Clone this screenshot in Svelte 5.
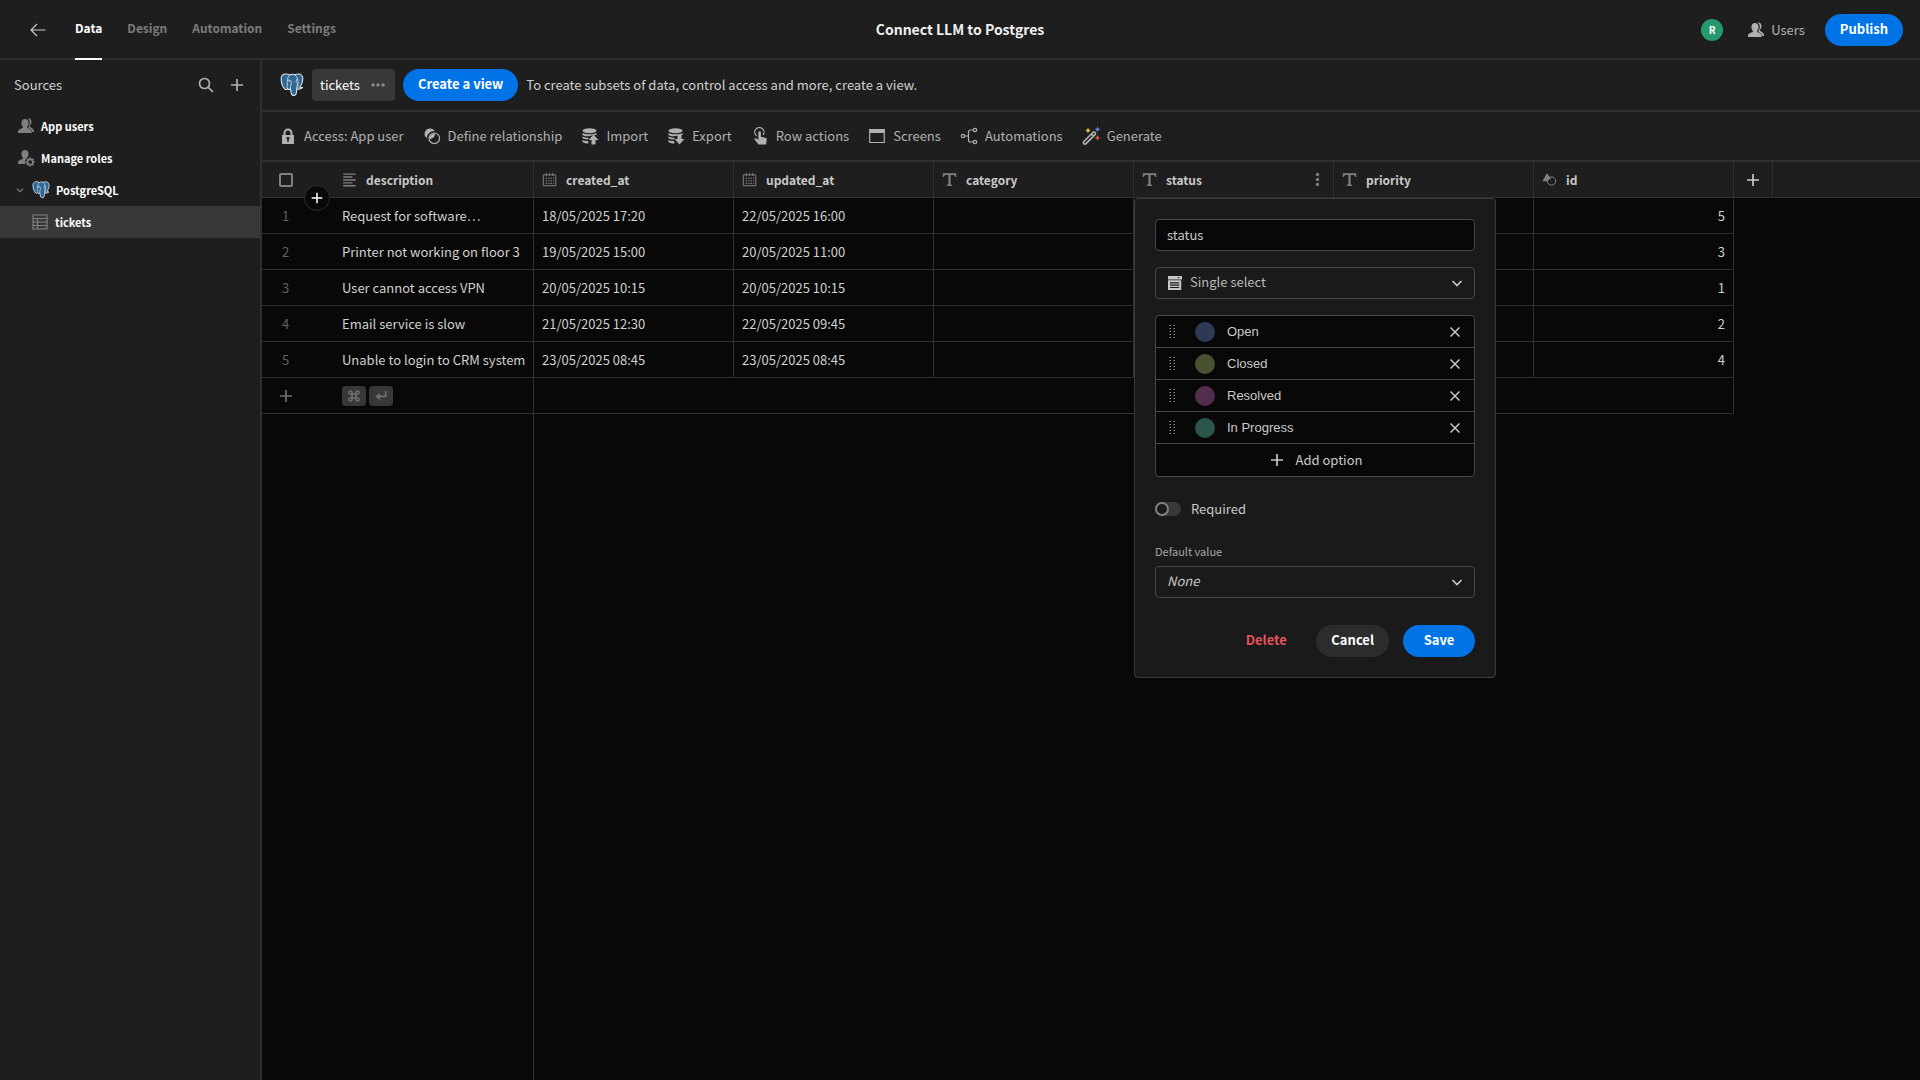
<script lang="ts">
  const tabs = ["Data", "Design", "Automation", "Settings"];
  let tab = $state("Data");

  const actions = [
    { icon: "lock", label: "Access: App user" },
    { icon: "relation", label: "Define relationship" },
    { icon: "import", label: "Import" },
    { icon: "export", label: "Export" },
    { icon: "touch", label: "Row actions" },
    { icon: "screens", label: "Screens" },
    { icon: "flow", label: "Automations" },
    { icon: "wand", label: "Generate" },
  ];

  const columns = [
    { name: "description", icon: "longtext" },
    { name: "created_at", icon: "calendar" },
    { name: "updated_at", icon: "calendar" },
    { name: "category", icon: "text" },
    { name: "status", icon: "text" },
    { name: "priority", icon: "text" },
    { name: "id", icon: "shapes" },
  ];

  const rows = [
    ["Request for software…", "18/05/2025 17:20", "22/05/2025 16:00", 5],
    ["Printer not working on floor 3", "19/05/2025 15:00", "20/05/2025 11:00", 3],
    ["User cannot access VPN", "20/05/2025 10:15", "20/05/2025 10:15", 1],
    ["Email service is slow", "21/05/2025 12:30", "22/05/2025 09:45", 2],
    ["Unable to login to CRM system", "23/05/2025 08:45", "23/05/2025 08:45", 4],
  ];

  let options = $state([
    { name: "Open", color: "#2e3a55" },
    { name: "Closed", color: "#475230" },
    { name: "Resolved", color: "#522d4d" },
    { name: "In Progress", color: "#2b544c" },
  ]);
  let columnName = $state("status");
  let required = $state(false);

  function removeOption(i: number) {
    options.splice(i, 1);
  }

  function addOption() {
    options.push({ name: "", color: "#2e3a55" });
  }
</script>

{#snippet icon(name: string)}
  <svg class="icon" viewBox="0 0 18 18" aria-hidden="true">
    {#if name === "back"}
      <path class="line" d="M16.5 9H2M8 3L2 9l6 6" />
    {:else if name === "search"}
      <circle class="line thick" cx="7.5" cy="7.5" r="5" />
      <path class="line thick" d="M11.3 11.3L16 16" />
    {:else if name === "plus"}
      <path class="line thick" d="M9 3v12M3 9h12" />
    {:else if name === "cross"}
      <path class="line thick" d="M4 4l10 10M14 4L4 14" />
    {:else if name === "chevron"}
      <path class="line thick" d="M4.5 7L9 11.5 13.5 7" />
    {:else if name === "more"}
      <circle cx="4" cy="9" r="1.7" /><circle cx="9" cy="9" r="1.7" /><circle cx="14" cy="9" r="1.7" />
    {:else if name === "kebab"}
      <circle cx="9" cy="3" r="2" /><circle cx="9" cy="9" r="2" /><circle cx="9" cy="15" r="2" />
    {:else if name === "users"}
      <path d="M8 2c2.400 0 3.600 1.700 3.600 4 0 1.600-.6 2.900-1.400 3.800v1.200c1.900.6 4.500 1.600 4.500 3.300V16H1v-1.700C1 12.600 3.800 11.600 5.800 11V9.800C5 8.900 4.400 7.600 4.400 6c0-2.300 1.200-4 3.600-4z" />
      <path d="M11.400 1.500c1.900.1 3.100 1.500 3.100 3.600 0 1.400-.6 2.600-1.400 3.500v1.400c1.800 1 4.200 2.300 4.200 5h-1.800c-.4-2-2.200-3.200-4-3.900V9.900c.8-1 1.300-2.300 1.300-3.900 0-1.900-.7-3.400-1.900-4.200z" />
    {:else if name === "roles"}
      <path d="M8 1c2.400 0 3.600 1.700 3.600 4 0 1.500-.5 2.700-1.300 3.600-1.600 1-2.500 3-2 5.200l.5 1.200H1v-1.500C1 11.600 3.800 10.600 5.800 10V8.800C5 7.900 4.400 6.600 4.400 5c0-2.300 1.200-4 3.600-4z" />
      <circle class="line thick" cx="13.200" cy="13" r="2.700" />
      <path class="line thick" d="M13.200 8.500v1.600M13.200 15.900v1.600M8.700 13h1.600M16.100 13h1.600M10 9.800l1.100 1.100M15.300 15.100l1.100 1.100M10 16.200l1.100-1.100M15.300 10.900l1.100-1.100" />
    {:else if name === "table"}
      <path class="line" d="M2 2h14v14H2zM2 5.500h14M2 9h14M2 12.500h14M6.500 5.500V16" />
    {:else if name === "lock"}
      <path fill-rule="evenodd" d="M3 8h1.500V6a4.500 4.500 0 0 1 9 0v2H15v9H3zM6.500 8h5V6a2.500 2.500 0 0 0-5 0zM8.300 12.800V15h1.400v-2.200a1.500 1.500 0 1 0-1.400 0z" />
    {:else if name === "relation"}
      <path d="M7 1.500a5.300 5.300 0 0 0-3.300 9.500A7.300 7.300 0 0 1 12 4.200 5.300 5.300 0 0 0 7 1.500z" />
      <circle class="line" cx="11.300" cy="11.300" r="5.300" />
      <path d="M12.200 6.300a6 6 0 0 1-6 6 6 6 0 0 1 6-6z" />
    {:else if name === "import" || name === "export"}
      <ellipse cx="8.500" cy="3.800" rx="7" ry="2.500" />
      <path d="M1.500 6c2 1.800 12 1.800 14 0v1.900l-4 .3C8 9.800 3.500 9.500 1.500 8z" />
      <path d="M1.500 9.500c1.700 1 4.400 1.300 6.200 1.200L7 12.500c-2 0-4.200-.4-5.500-1.200zM1.500 12.900c1.500.9 3.800 1.200 5.800 1.200v2.400c-2.500 0-5.200-.6-5.800-1.500z" />
      {#if name === "import"}
        <path d="M12.500 7.500l5 5.500h-3v4.500h-4V13h-3z" />
      {:else}
        <path d="M12.500 17.500l5-5.500h-3V8h-4v4h-3z" />
      {/if}
    {:else if name === "touch"}
      <path class="line" d="M5.500 8.800A4.600 4.600 0 1 1 12 8" />
      <path d="M7.300 5.500a1.300 1.300 0 0 1 2.600 0v4.200l5 1.300c.8.300 1 .8.900 1.500L15 17.500H7.500L3.200 12c.8-1.200 2-1 3 0l1.100 1z" />
    {:else if name === "screens"}
      <path class="line" d="M1.700 2.500h14.600v13H1.700z" />
      <path d="M1.700 2.500h14.600V6H1.700z" />
    {:else if name === "flow"}
      <circle class="line" cx="3" cy="9" r="1.700" />
      <circle class="line" cx="15" cy="3" r="1.700" />
      <circle class="line" cx="15" cy="15" r="1.700" />
      <path class="line" d="M5 9h3.500M13 3h-2.500a2 2 0 0 0-2 2v8a2 2 0 0 0 2 2H13" />
    {:else if name === "wand"}
      <path class="line thick" d="M1.800 14.500l9-9a1.500 1.500 0 0 1 2.200 2.200l-9 9a1.500 1.500 0 0 1-2.200-2.200zM9.300 7l2.200 2.200" />
      <path fill="#f0c040" d="M6 .8l.9 1.800 1.800.9-1.800.9L6 6.200l-.9-1.800-1.800-.9 1.800-.9z" />
      <path fill="#6b7fe8" d="M15.500 -.5l.9 2 2 .9-2 .9-.9 2-.9-2-2-.9 2-.9z" />
      <path fill="#e8543c" d="M15.500 8l.9 2 2 .9-2 .9-.9 2-.9-2-2-.9 2-.9z" />
    {:else if name === "longtext"}
      <path class="line thick" d="M1.500 2.500h15M1.500 6h11M1.500 9.500h15M1.500 13h11M1.500 16.500h15" />
    {:else if name === "calendar"}
      <path class="line" d="M1.500 3.500h15v13h-15zM5 1v4M13 1v4M9 1v3" />
      <path class="dots" d="M4.500 7.500h10M4.500 10.500h10M4.500 13.500h10" />
    {:else if name === "text"}
      <path d="M1 1.500h16v4.400h-1.300c-.3-1.800-.9-2.400-2.700-2.400h-2.700v10.700c0 1 .5 1.200 2 1.300v1.300H5.700v-1.300c1.500-.1 2-.3 2-1.300V3.500H5c-1.800 0-2.400.6-2.700 2.400H1z" />
    {:else if name === "shapes"}
      <path d="M6 1.500L11 8.500A5.500 5.500 0 0 0 6.700 11H.5z" />
      <circle class="line" cx="11.500" cy="10.800" r="5" />
    {:else if name === "dropdown"}
      <path fill-rule="evenodd" d="M0 0h18v4.500H0zM12 1.300l1.500 1.700L15 1.300zM0 5.500h17V18H0zM2.500 8v1.500h12V8zM2.500 11v1.500h12V11zM2.500 14v1.500h12V14z" />
    {:else if name === "grip"}
      <path class="dots fine" d="M7 1v17M11.500 1v17" />
    {:else if name === "command"}
      <path class="line heavy" d="M6.500 6.500h5v5h-5zM6.500 6.500h-2a2 2 0 1 1 2-2zM11.500 6.500v-2a2 2 0 1 1 2 2zM11.500 11.500h2a2 2 0 1 1-2 2zM6.500 11.500v2a2 2 0 1 1-2-2z" />
    {:else if name === "enter"}
      <path class="line heavy" d="M15 2.500v7H5" />
      <path d="M7.500 5v9L1.500 9.500z" />
    {/if}
  </svg>
{/snippet}

{#snippet postgres()}
  <svg class="logo" viewBox="0 0 24 24" aria-hidden="true">
    <path fill="#2f6792" stroke="#dfe6ec" stroke-width="1.100" stroke-linejoin="round" d="M5 1C2.500 1.300 1 3.200 1.200 6.500c.2 3.500 1.700 7.800 3.700 9.600 1 .8 2 .5 2.700-.4.900.7 1.900.9 3 .7.300 1.900.4 3.800 1.100 5 .7 1.200 3 1.300 4 .3.900-1 .9-3.300 1-5.600 2.200.3 4.500-.1 5.800-1.500-.8-.2-1.700-.1-2.600-.4 1.600-2.300 2.900-5.600 2.900-8.400 0-3-1.700-4.800-4.600-4.800-1.200 0-2.300.3-3.400.7-1.500-.6-3.500-.7-5 .2C8.300 1.200 6.600.8 5 1z" />
    <path fill="none" stroke="#dfe6ec" stroke-width=".8" stroke-linecap="round" d="M9.800 2C7 4 7.600 8 7.200 11c-.2 1.900-.2 3.300.4 4.700M14.800 1.700c2.700 2 3.700 5.500 3.200 9-.2 1.600-.8 2.900.2 4.400M7.500 7.700c1.200-.9 3-.8 3.600.4.500 1.400 0 3.500-.6 5.200-.3 1.100-.1 2.100.1 3M16.700 16c-.3-2 .3-3.200 1.300-5.300-1.300-.3-2.800-1.800-1.700-3.200M9.200 8.200v.5M16.500 6.700h.6" />
  </svg>
{/snippet}

<div class="app">
  <header class="top">
    <nav class="tabs">
      <button class="back" aria-label="Back">{@render icon("back")}</button>
      {#each tabs as name}
        <button class="tab" class:selected={tab === name} onclick={() => (tab = name)}>{name}</button>
      {/each}
    </nav>
    <h1>Connect LLM to Postgres</h1>
    <div class="account">
      <span class="avatar">R</span>
      <button class="users">{@render icon("users")}Users</button>
      <button class="pill primary">Publish</button>
    </div>
  </header>

  <div class="main">
    <aside>
      <div class="aside-head">
        <h2>Sources</h2>
        <button aria-label="Search sources">{@render icon("search")}</button>
        <button aria-label="Add source">{@render icon("plus")}</button>
      </div>
      <ul>
        <li><a href="#users">{@render icon("users")}App users</a></li>
        <li><a href="#roles">{@render icon("roles")}Manage roles</a></li>
        <li>
          <a class="source" href="#postgres">
            {@render icon("chevron")}{@render postgres()}PostgreSQL
          </a>
        </li>
        <li class="active"><a class="child" href="#tickets">{@render icon("table")}tickets</a></li>
      </ul>
    </aside>

    <section class="content">
      <div class="views">
        {@render postgres()}
        <button class="chip">tickets {@render icon("more")}</button>
        <button class="pill primary">Create a view</button>
        <p>To create subsets of data, control access and more, create a view.</p>
      </div>

      <div class="actions">
        {#each actions as action}
          <button class={action.icon}>{@render icon(action.icon)}{action.label}</button>
        {/each}
      </div>

      <div class="grid">
        <table>
          <colgroup>
            <col class="gutter-col" />
            {#each columns as column (column.name)}
              <col class="data-col" />
            {/each}
            <col class="add-col" />
            <col />
          </colgroup>
          <thead>
            <tr>
              <th class="gutter">
                <input type="checkbox" aria-label="Select all rows" />
                <button class="insert" aria-label="Insert row">{@render icon("plus")}</button>
              </th>
              {#each columns as column (column.name)}
                <th class={column.name}>
                  <div class="head">
                    {@render icon(column.icon)}
                    <span>{column.name}</span>
                    {#if column.name === "status"}
                      <button class="menu" aria-label="Column menu">{@render icon("kebab")}</button>
                    {/if}
                  </div>
                  {#if column.name === "status"}
                    <form class="popover" onsubmit={(e) => e.preventDefault()}>
                      <input class="field" type="text" aria-label="Column name" bind:value={columnName} />
                      <div class="select typed">
                        {@render icon("dropdown")}
                        <select aria-label="Column type">
                          <option>Single select</option>
                        </select>
                        {@render icon("chevron")}
                      </div>
                      <div class="options">
                        {#each options as option, i}
                          <div class="option">
                            {@render icon("grip")}
                            <span class="swatch" style="background: {option.color}"></span>
                            <input type="text" aria-label="Option name" bind:value={option.name} />
                            <button type="button" aria-label="Remove option" onclick={() => removeOption(i)}>
                              {@render icon("cross")}
                            </button>
                          </div>
                        {/each}
                        <button class="add" type="button" onclick={addOption}>
                          {@render icon("plus")}Add option
                        </button>
                      </div>
                      <label class="switch">
                        <input type="checkbox" bind:checked={required} />
                        Required
                      </label>
                      <div class="default">
                        <label for="default-value">Default value</label>
                        <div class="select none">
                          <select id="default-value">
                            <option>None</option>
                          </select>
                          {@render icon("chevron")}
                        </div>
                      </div>
                      <div class="buttons">
                        <button class="pill danger" type="button">Delete</button>
                        <button class="pill secondary" type="button">Cancel</button>
                        <button class="pill primary" type="submit">Save</button>
                      </div>
                    </form>
                  {/if}
                </th>
              {/each}
              <th class="add-column">
                <button aria-label="Add column">{@render icon("plus")}</button>
              </th>
              <th class="rest"></th>
            </tr>
          </thead>
          <tbody>
            {#each rows as [description, created, updated, id], i}
              <tr>
                <td class="gutter">{i + 1}</td>
                <td>{description}</td>
                <td>{created}</td>
                <td>{updated}</td>
                <td></td>
                <td></td>
                <td></td>
                <td class="number">{id}</td>
              </tr>
            {/each}
            <tr class="new">
              <td class="gutter"><button aria-label="Add row">{@render icon("plus")}</button></td>
              <td>
                <div class="keys"><kbd>{@render icon("command")}</kbd><kbd>{@render icon("enter")}</kbd></div>
              </td>
              <td colspan="6"></td>
            </tr>
          </tbody>
        </table>
      </div>
    </section>
  </div>
</div>

<style>
  :global(body) {
    background: #080808;
  }

  .app {
    --line: #2f2f2f;
    --panel: #1e1e1e;
    display: flex;
    flex-direction: column;
    min-height: 100vh;
    color: #d0d0d0;
    font: 13px/20px "Noto Sans CJK SC", "Noto Sans", sans-serif;
  }

  .app *,
  .app *::before {
    box-sizing: border-box;
  }

  button,
  input,
  select {
    font: inherit;
    color: inherit;
    background: none;
    border: 0;
    margin: 0;
    padding: 0;
  }

  button {
    display: flex;
    align-items: center;
    cursor: pointer;
  }

  .icon {
    display: block;
    flex: none;
    width: 18px;
    height: 18px;
    fill: currentColor;
  }

  .line {
    fill: none;
    stroke: currentColor;
    stroke-width: 1.2;
  }

  .thick {
    stroke-width: 1.7;
  }

  .heavy {
    stroke-width: 2;
  }

  .dots {
    fill: none;
    stroke: currentColor;
    stroke-width: 1.5;
    stroke-dasharray: 1.5 1.5;
  }

  .fine {
    stroke-width: 1.2;
    stroke-dasharray: 1.2 2.2;
  }

  .logo {
    flex: none;
    width: 24px;
    height: 24px;
  }

  .pill {
    justify-content: center;
    min-width: 72px;
    height: 32px;
    padding: 0 15px 2px;
    border-radius: 16px;
    color: #fff;
    font-weight: 700;
  }

  .primary {
    background: #0073e6;
  }

  .secondary {
    background: #2c2c2c;
  }

  .danger {
    color: #e4515f;
  }

  /* top bar */
  .top {
    display: grid;
    grid-template-columns: 1fr auto 1fr;
    height: 60px;
    padding: 0 17px;
    background: var(--panel);
    border-bottom: 2px solid var(--line);
  }

  .tabs {
    display: flex;
    gap: 25px;
    padding-left: 12px;
  }

  .back {
    margin-right: 3px;
    color: #c8c8c8;
  }

  .tab {
    height: 60px;
    padding-bottom: 2px;
    border-bottom: 2px solid transparent;
    color: #7c7c7c;
    font-size: 12px;
    font-weight: 700;
  }

  .tab.selected {
    color: #fff;
    border-color: #fff;
  }

  h1 {
    margin: 0;
    padding-bottom: 2px;
    align-self: center;
    color: #f0f0f0;
    font-size: 14px;
    line-height: 20px;
  }

  .account {
    display: flex;
    align-items: center;
    justify-content: flex-end;
  }

  .avatar {
    width: 22px;
    border-radius: 50%;
    background: #26996c;
    color: #fff;
    font-size: 10px;
    font-weight: 700;
    line-height: 22px;
    text-align: center;
  }

  .users {
    gap: 6px;
    margin: 0 20px 0 24px;
    color: #b0b0b0;
  }

  /* sources */
  .main {
    display: flex;
    flex: 1;
  }

  aside {
    width: 262px;
    flex: none;
    background: var(--panel);
    border-right: 2px solid var(--line);
  }

  .aside-head {
    display: flex;
    align-items: center;
    gap: 13px;
    height: 50px;
    padding: 0 14px;
    color: #b0b0b0;
  }

  h2 {
    flex: 1;
    margin: 0;
    color: #d0d0d0;
    font-size: 13px;
    font-weight: 400;
  }

  ul {
    list-style: none;
    margin: 0;
    padding: 0;
  }

  li a {
    display: flex;
    align-items: center;
    gap: 6px;
    height: 32px;
    padding-left: 17px;
    color: #fff;
    font-size: 11px;
    font-weight: 700;
    text-decoration: none;
  }

  li .icon {
    color: #808080;
  }

  li .logo {
    width: 18px;
    height: 18px;
  }

  li .source {
    padding-left: 14px;
  }

  .source .icon {
    width: 12px;
    height: 12px;
  }

  li .child {
    padding-left: 31px;
  }

  li.active {
    background: #383838;
  }

  /* table toolbars */
  .content {
    display: flex;
    flex-direction: column;
    flex: 1;
    min-width: 0;
  }

  .views,
  .actions {
    display: flex;
    align-items: center;
    background: var(--panel);
    border-bottom: 2px solid var(--line);
  }

  .views {
    gap: 8px;
    height: 52px;
    padding: 0 18px;
  }

  .views p {
    margin: 0;
  }

  .chip {
    gap: 9px;
    height: 32px;
    padding: 0 8px;
    border-radius: 4px;
    background: #383838;
    color: #fff;
  }

  .chip .icon {
    color: #8a8a8a;
  }

  .actions {
    gap: 19px;
    height: 50px;
    padding: 0 17px;
    color: #b0b0b0;
  }

  .actions button {
    gap: 7px;
  }

  .wand .icon {
    overflow: visible;
  }

  /* data grid */
  .grid {
    flex: 1;
    background: linear-gradient(var(--line), var(--line)) 271px 0 / 1px 100% no-repeat;
  }

  table {
    width: 100%;
    table-layout: fixed;
    border-collapse: separate;
    border-spacing: 0;
  }

  .gutter-col {
    width: 72px;
  }

  .data-col {
    width: 200px;
  }

  .add-col {
    width: 39px;
  }

  th,
  td {
    height: 36px;
    padding: 0 8px;
    border: 0 solid var(--line);
    border-width: 0 1px 1px 0;
    text-align: left;
    white-space: nowrap;
  }

  th {
    position: relative;
    background: var(--panel);
    color: #c8c8c8;
  }

  .rest {
    border-right: 0;
  }

  .gutter {
    padding: 0 0 0 17px;
    border-right: 0;
  }

  td.gutter {
    padding: 0 25px 0 0;
    color: #606060;
    text-align: center;
  }

  .gutter input {
    display: block;
    appearance: none;
    width: 14px;
    height: 14px;
    border: 2px solid #808080;
    border-radius: 2px;
  }

  .insert {
    position: absolute;
    z-index: 1;
    right: 4px;
    bottom: -14px;
    justify-content: center;
    width: 26px;
    height: 26px;
    border: 1px solid #2c2c2c;
    border-radius: 50%;
    background: #080808;
    color: #fff;
  }

  .insert .icon {
    width: 16px;
    height: 16px;
  }

  .head {
    display: flex;
    align-items: center;
    gap: 9px;
    font-size: 12px;
  }

  .head .icon {
    width: 15px;
    height: 15px;
    color: #808080;
  }

  .head span {
    flex: 1;
  }

  .add-column {
    padding: 0 10px;
  }

  .number {
    text-align: right;
  }

  .new .icon {
    color: #707070;
  }

  .new button {
    margin: 0 auto;
  }

  .keys {
    display: flex;
    gap: 3px;
  }

  kbd {
    display: grid;
    place-items: center;
    width: 24px;
    height: 20px;
    border-radius: 4px;
    background: #383838;
  }

  kbd .icon {
    width: 14px;
    height: 14px;
    color: #a0a0a0;
  }

  /* column editor */
  .status {
    z-index: 2;
  }

  .popover {
    position: absolute;
    top: 36px;
    left: 0;
    display: flex;
    flex-direction: column;
    gap: 16px;
    width: 362px;
    padding: 20px;
    border: 1px solid #3c3c3c;
    border-radius: 4px;
    background: #1a1a1a;
    font-weight: 400;
  }

  .field,
  .select select {
    width: 100%;
    height: 32px;
    padding: 0 11px 2px;
    border: 1px solid #484848;
    border-radius: 4px;
  }

  .field {
    background: #080808;
  }

  .select {
    position: relative;
  }

  .select select {
    display: block;
    appearance: none;
  }

  .select .icon {
    position: absolute;
    top: 7px;
    right: 9px;
    pointer-events: none;
  }

  .typed .icon:first-child {
    top: 9px;
    left: 13px;
    width: 14px;
    height: 14px;
  }

  .typed select {
    padding-left: 34px;
    color: #b8b8b8;
  }

  .none select {
    font-style: italic;
  }

  .options {
    overflow: hidden;
    border: 1px solid #484848;
    border-radius: 4px;
    background: #080808;
  }

  .option {
    display: flex;
    align-items: center;
    height: 32px;
    padding: 0 11px 0 8px;
    border-bottom: 1px solid #484848;
  }

  .option .icon {
    width: 16px;
    height: 16px;
  }

  .swatch {
    width: 20px;
    height: 20px;
    margin: 0 12px 0 15px;
    border-radius: 50%;
  }

  .option input {
    flex: 1;
    min-width: 0;
    font-family: "Liberation Sans", Arial, sans-serif;
  }

  .add {
    justify-content: center;
    gap: 10px;
    width: 100%;
    height: 32px;
  }

  .switch {
    display: flex;
    align-items: center;
    gap: 10px;
    height: 32px;
  }

  .switch input {
    appearance: none;
    width: 26px;
    height: 14px;
    border-radius: 7px;
    background: #383838;
  }

  .switch input::before {
    content: "";
    display: block;
    width: 14px;
    height: 14px;
    border: 2px solid #808080;
    border-radius: 50%;
    background: #1a1a1a;
  }

  .switch input:checked::before {
    margin-left: 12px;
  }

  .default label {
    display: block;
    height: 25px;
    color: #a8a8a8;
    font-size: 11px;
  }

  .buttons {
    display: flex;
    justify-content: flex-end;
    gap: 14px;
    margin-top: 11px;
  }
</style>
